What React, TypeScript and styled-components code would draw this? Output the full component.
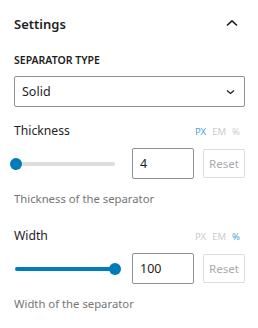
import React, { useState } from "react";
import styled, { createGlobalStyle } from "styled-components";

const GlobalStyle = createGlobalStyle`
  html, body {
    margin: 0;
    padding: 0;
    background: #ffffff;
  }
  body {
    font-family: "Noto Sans", "Open Sans", sans-serif;
    color: #1e1e1e;
  }
`;

const Panel = styled.div`
  width: 258px;
  height: 328px;
  box-sizing: border-box;
  padding: 14px 13px 0 14px;
  overflow: hidden;
`;

const Header = styled.div`
  display: flex;
  align-items: center;
  justify-content: space-between;
  height: 20px;
  padding-right: 7px;
`;

const Title = styled.h2`
  margin: 0;
  font-size: 13px;
  font-weight: 600;
  line-height: 20px;
`;

const ToggleIcon = styled.svg`
  width: 12px;
  height: 8px;
  margin-top: -2px;
`;

const SectionLabel = styled.div`
  margin-top: 18px;
  font-size: 10.5px;
  font-weight: 600;
  line-height: 16px;
  text-transform: uppercase;
`;

const SelectBox = styled.div`
  margin-top: 8px;
  height: 31px;
  box-sizing: border-box;
  border: 1px solid #8c8f94;
  border-radius: 2px;
  display: flex;
  align-items: center;
  justify-content: space-between;
  padding: 0 9px 0 7px;
  font-size: 12.5px;
`;

const Field = styled.div<{ $first?: boolean }>`
  margin-top: ${(p) => (p.$first ? "13px" : "17px")};
`;

const LabelRow = styled.div`
  display: flex;
  align-items: baseline;
  justify-content: space-between;
  height: 18px;
`;

const Label = styled.label`
  font-size: 12.2px;
  line-height: 18px;
`;

const Units = styled.div`
  display: flex;
  gap: 6px;
  padding-right: 5px;
  margin-top: 6px;
`;

const Unit = styled.span<{ $active?: boolean }>`
  font-size: 9.5px;
  line-height: 12px;
  color: ${(p) => (p.$active ? "#4da3d8" : "#cccccc")};
`;

const ControlRow = styled.div`
  display: flex;
  align-items: center;
  margin-top: 10px;
  height: 31px;
`;

const Slider = styled.div`
  position: relative;
  flex: 1;
  height: 12px;
  display: flex;
  align-items: center;
  margin-right: 10px;
`;

const Track = styled.div`
  position: relative;
  width: 100px;
  height: 4px;
  margin-left: 1px;
  border-radius: 2px;
  background: #dddddd;
`;

const Fill = styled.div`
  position: absolute;
  left: 0;
  top: 0;
  bottom: 0;
  border-radius: 2px;
  background: #007cba;
`;

const Thumb = styled.div`
  position: absolute;
  top: 50%;
  width: 12px;
  height: 12px;
  border-radius: 50%;
  background: #007cba;
  transform: translate(-50%, -50%);
`;

const NumberInput = styled.input`
  width: 62px;
  height: 31px;
  box-sizing: border-box;
  border: 1px solid #8c8f94;
  border-radius: 2px;
  padding: 0 0 0 7px;
  font-family: inherit;
  font-size: 12.5px;
  color: #1e1e1e;
  outline: none;
`;

const ResetButton = styled.button`
  width: 42px;
  height: 29px;
  margin-left: 9px;
  box-sizing: border-box;
  border: 1px solid #dcdcde;
  border-radius: 2px;
  background: #ffffff;
  color: #a7aaad;
  font-family: inherit;
  font-size: 11.5px;
  padding: 0;
`;

const Help = styled.p`
  margin: 11px 0 0;
  font-size: 11.3px;
  line-height: 18px;
  color: #757575;
`;

interface RangeFieldProps {
  label: string;
  help: string;
  value: number;
  max: number;
  unit: "px" | "em" | "%";
  first?: boolean;
}

const RangeField: React.FC<RangeFieldProps> = ({ label, help, value, max, unit, first }) => {
  const [val, setVal] = useState(String(value));
  const pct = Math.min(100, (Number(val) / max) * 100);
  return (
    <Field $first={first}>
      <LabelRow>
        <Label>{label}</Label>
        <Units>
          <Unit $active={unit === "px"}>PX</Unit>
          <Unit $active={unit === "em"}>EM</Unit>
          <Unit $active={unit === "%"}>%</Unit>
        </Units>
      </LabelRow>
      <ControlRow>
        <Slider>
          <Track>
            <Fill style={{ width: `${pct}%` }} />
            <Thumb style={{ left: `${pct}%` }} />
          </Track>
        </Slider>
        <NumberInput value={val} onChange={(e) => setVal(e.target.value)} />
        <ResetButton>Reset</ResetButton>
      </ControlRow>
      <Help>{help}</Help>
    </Field>
  );
};

export default function App() {
  return (
    <>
      <GlobalStyle />
      <Panel>
        <Header>
          <Title>Settings</Title>
          <ToggleIcon viewBox="0 0 12 8">
            <path d="M1 6.5 L6 1.8 L11 6.5" fill="none" stroke="#1e1e1e" strokeWidth="1.6" />
          </ToggleIcon>
        </Header>
        <SectionLabel>Separator Type</SectionLabel>
        <SelectBox>
          <span>Solid</span>
          <svg width="9" height="6" viewBox="0 0 9 6">
            <path d="M1 1.5 L4.5 4.5 L8 1.5" fill="none" stroke="#1e1e1e" strokeWidth="1.3" />
          </svg>
        </SelectBox>
        <RangeField
          first
          label="Thickness"
          help="Thickness of the separator"
          value={4}
          max={400}
          unit="px"
        />
        <RangeField
          label="Width"
          help="Width of the separator"
          value={100}
          max={100}
          unit="%"
        />
      </Panel>
    </>
  );
}
